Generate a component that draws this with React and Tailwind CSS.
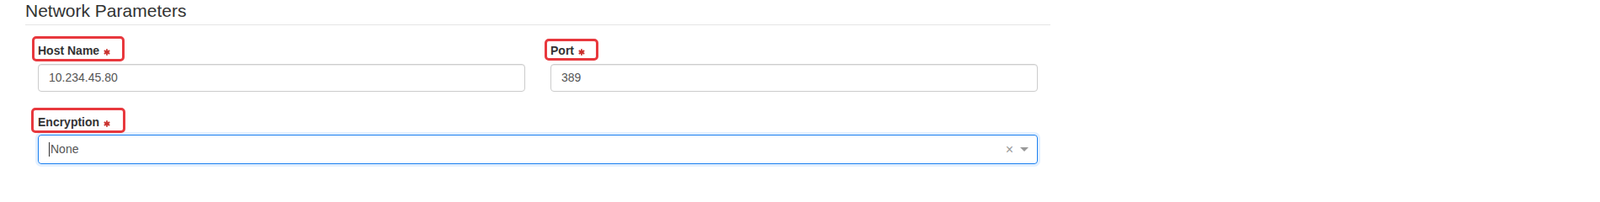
import React from 'react';

// Small six-spoke asterisk used for required fields
const Required = () => (
  <svg width="8" height="8" viewBox="0 0 16 16" className="ml-[5px] inline-block align-[-1px]">
    <g stroke="#c9302c" strokeWidth="3.6" strokeLinecap="butt">
      <line x1="8" y1="0.5" x2="8" y2="15.5" />
      <line x1="1.5" y1="4.2" x2="14.5" y2="11.8" />
      <line x1="1.5" y1="11.8" x2="14.5" y2="4.2" />
    </g>
  </svg>
);

// Label with the red annotation frame drawn over it
const FieldLabel = ({ children, frame }) => (
  <div className="relative w-fit text-[14px] leading-[20px] font-bold text-[#333]">
    {children}
    <Required />
    <span className={`absolute border-[3px] border-[#e8383d] rounded-[5px] ${frame}`} />
  </div>
);

const TextInput = ({ value }) => (
  <div className="h-[33px] border border-[#ccc] rounded-[4px] px-[12px] flex items-center text-[14px] text-[#555] shadow-[inset_0_1px_1px_rgba(0,0,0,0.075)]">
    {value}
  </div>
);

const App = () => {
  return (
    <div className="w-[1901px] h-[221px] bg-white font-['Liberation_Sans',Arial,sans-serif]">
      <div className="ml-[30px] w-[1218px]">
        <h3 className="pt-[1px] pb-[4px] text-[21px] leading-[24px] font-normal text-[#333] border-b border-[#e5e5e5]">
          Network Parameters
        </h3>

        <div className="grid grid-cols-2 mt-[20px]">
          <div className="px-[15px]">
            <FieldLabel frame="-left-[7px] -top-[7px] -right-[17px] -bottom-[3px]">Host Name</FieldLabel>
            <div className="mt-[6px]">
              <TextInput value="10.234.45.80" />
            </div>
          </div>
          <div className="px-[15px]">
            <FieldLabel frame="-left-[7px] -top-[4px] -right-[16px] -bottom-[2px]">Port</FieldLabel>
            <div className="mt-[6px]">
              <TextInput value="389" />
            </div>
          </div>
        </div>

        <div className="px-[15px] mt-[26px]">
          <FieldLabel frame="-left-[8px] -top-[7px] -right-[18px] -bottom-[3px]">Encryption</FieldLabel>
          <div className="mt-[5px] h-[35px] border border-[#1a7ff0] rounded-[4px] shadow-[0_0_0_3px_#e3f0ff] flex items-center pl-[12px] pr-[10px] text-[14px] text-[#555]">
            <span className="w-px h-[17px] bg-[#333] mr-px" />
            <span className="flex-1">None</span>
            <span className="text-[#999] text-[16px] leading-none mr-[8px]">×</span>
            <span className="w-0 h-0 border-l-[5px] border-r-[5px] border-t-[5px] border-l-transparent border-r-transparent border-t-[#999]" />
          </div>
        </div>
      </div>
    </div>
  );
};

export default App;
